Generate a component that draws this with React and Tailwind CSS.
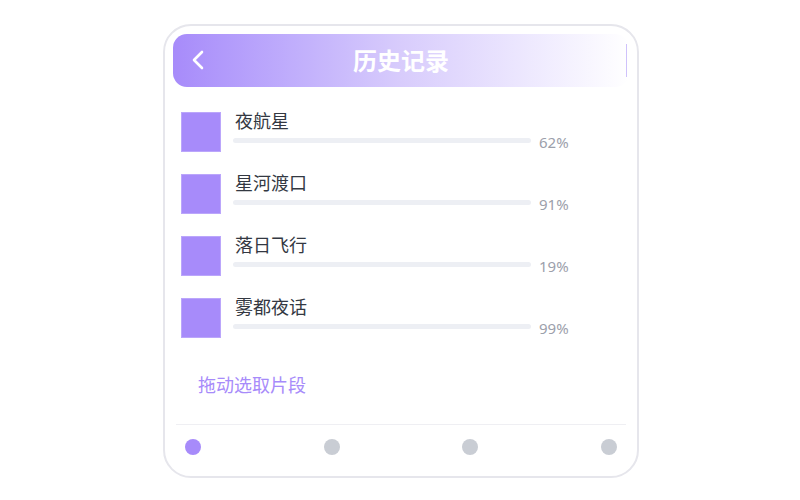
import React from 'react'

const ITEMS = [
  { name: '夜航星', pct: 62 },
  { name: '星河渡口', pct: 91 },
  { name: '落日飞行', pct: 19 },
  { name: '雾都夜话', pct: 99 },
]

const FONT = { fontFamily: '"Noto Sans", "Noto Sans CJK SC", sans-serif' }

export default function App() {
  return (
    <div className="w-[800px] h-[500px] bg-white pt-[24px]" style={FONT}>
      <div className="ml-[163px] w-[476px] h-[454px] rounded-[28px] border-2 border-[#e6e6ec] p-2 flex flex-col">
        {/* Header */}
        <div className="relative h-[53px] shrink-0 rounded-[14px] bg-gradient-to-r from-[#a78bfa] via-[#d8ccfc] to-white flex items-center">
          <svg className="absolute left-[18px] top-[16px]" width="14" height="20" viewBox="0 0 14 20" fill="none">
            <path d="M11 2 L3 10 L11 18" stroke="white" strokeWidth="2.6" strokeLinecap="round" strokeLinejoin="round" />
          </svg>
          <h1 className="flex-1 text-center text-[24px] leading-[30px] font-bold text-white">历史记录</h1>
          <div className="absolute right-[2px] top-[10px] w-px h-[33px] bg-[#cfc2fb]" />
        </div>

        {/* List */}
        <div className="mt-[25px] px-2 flex flex-col gap-[22px]">
          {ITEMS.map((item) => (
            <div key={item.name} className="flex items-start h-[40px]">
              <div className="w-[40px] h-[40px] shrink-0 bg-[#a78bfa] border border-[#bba6fb]" />
              <div className="ml-[12px] flex flex-col">
                <div className="pl-[2px] text-[18px] leading-[20px] text-[#333842] -mt-px">{item.name}</div>
                <div className="mt-[1px] flex items-center h-[20px]">
                  <div className="w-[298px] h-[5px] rounded-full bg-[#edeff4] -mt-[3px]" />
                  <span className="ml-[8px] text-[15px] text-[#9ca0ab]">{item.pct}%</span>
                </div>
              </div>
            </div>
          ))}
        </div>

        <div className="mt-[35px] pl-[25px] text-[18px] leading-[24px] text-[#a78bfa]">拖动选取片段</div>

        <div className="mt-[27px] mx-[3px] h-px bg-[#efeff3]" />

        <div className="mt-[14px] px-3 flex justify-between">
          <span className="w-[16px] h-[16px] rounded-full bg-[#a78bfa]" />
          <span className="w-[16px] h-[16px] rounded-full bg-[#c9cdd4]" />
          <span className="w-[16px] h-[16px] rounded-full bg-[#c9cdd4]" />
          <span className="w-[16px] h-[16px] rounded-full bg-[#c9cdd4]" />
        </div>
      </div>
    </div>
  )
}
